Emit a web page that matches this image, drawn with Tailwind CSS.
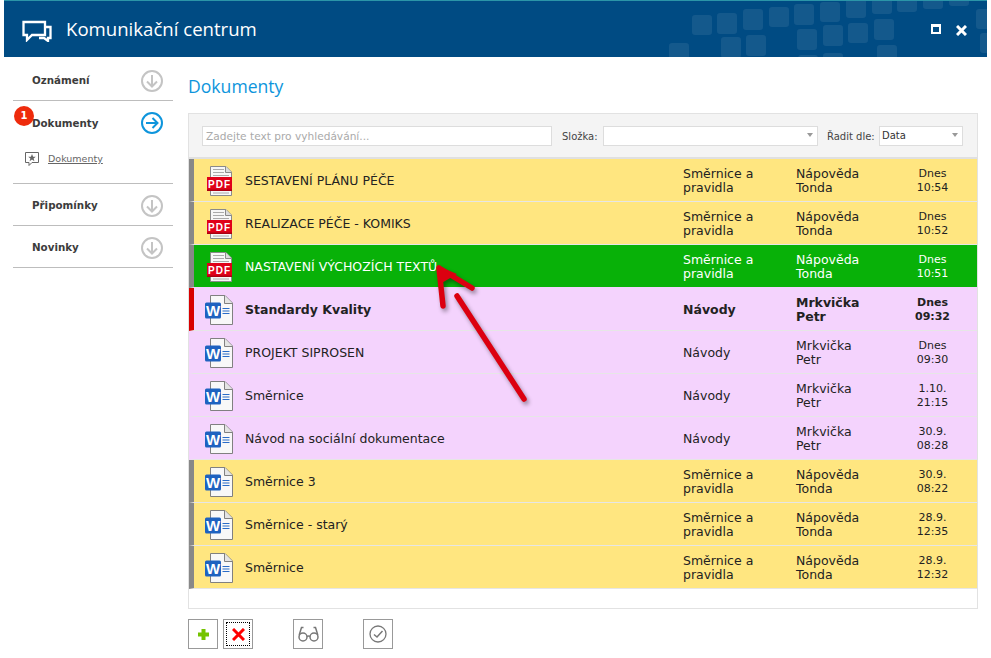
<!doctype html>
<html lang="cs"><head><meta charset="utf-8">
<script src="https://cdn.jsdelivr.net/npm/@tailwindcss/browser@4"></script>
</head>
<body class="bg-white">
<div class="relative w-[991px] h-[658px] overflow-hidden bg-white font-['DejaVu_Sans',sans-serif] text-[#222]">
  <svg width="0" height="0" class="absolute">
    <defs>
      <symbol id="pdf" viewBox="0 0 26 30">
        <path d="M3.500 .5H19L24.500 6V29.500H3.500Z" fill="#f7f7f7" stroke="#8a8a8a"/><path d="M18.500 .5V6.500H24.500" fill="#ddd" stroke="#8a8a8a"/>
        <path d="M6 3.500H17M6 6.500H17M6 9.500H22M6 27H22" stroke="#aaa"/>
        <rect x="0" y="11" width="25" height="14" fill="#e00019"/><rect x="0" y="23.500" width="25" height="1.500" fill="#a90012"/>
        <text x="12.500" y="22" text-anchor="middle" font-family="Liberation Sans" font-size="10" font-weight="700" fill="#fff" letter-spacing="1">PDF</text>
      </symbol>
      <symbol id="word" viewBox="0 0 28 30">
        <path d="M5.500 .5H20L27.500 8V29.500H5.500Z" fill="#f8f8f8" stroke="#808080"/><path d="M19.500 .5V8.500H27.500" fill="#e4e4e4" stroke="#808080"/>
        <rect x="0" y="7.500" width="16" height="16" rx="1.500" fill="#1e62c0"/>
        <text x="8" y="21" text-anchor="middle" font-family="Liberation Sans" font-size="15" font-weight="700" fill="#fff">W</text>
        <path d="M17.500 13.500H24.500M17.500 16H24.500M17.500 18.500H24.500" stroke="#2a6cc8"/>
      </symbol>
      <symbol id="down" viewBox="0 0 22 22"><circle cx="11" cy="11" r="10" fill="none" stroke="#c4c4c4" stroke-width="2"/><path d="M11 5V16.500M6 11.500L11 16.500L16 11.500" fill="none" stroke="#c4c4c4" stroke-width="2"/></symbol>
    </defs>
  </svg>

  <header class="absolute left-[4px] top-0 w-[983px] h-[57px] border-t border-[#2b95a8] bg-[#004b83] overflow-hidden text-white">
    <svg class="absolute left-[620px] top-[-1px]" width="363" height="58" fill="#fff" fill-opacity=".08">
      <rect x="68" y="15" width="20" height="20" rx="3"/><rect x="93" y="13" width="20" height="21" rx="3"/><rect x="119" y="9" width="20" height="21" rx="3"/><rect x="145" y="7" width="20" height="20" rx="3"/><rect x="170" y="4" width="20" height="21" rx="3"/><rect x="196" y="2" width="20" height="20" rx="3"/><rect x="222" y="-3" width="20" height="21" rx="3"/><rect x="248" y="-6" width="20" height="20" rx="3"/><rect x="273" y="-8" width="20" height="20" rx="3"/><rect x="299" y="-11" width="20" height="20" rx="3"/><rect x="325" y="-14" width="20" height="20" rx="3"/>
      <rect x="352" y="9" width="20" height="20" rx="3"/><rect x="356" y="33" width="20" height="20" rx="3"/>
      <rect x="97" y="37" width="20" height="21" rx="3"/><rect x="122" y="35" width="20" height="21" rx="3"/><rect x="45" y="43" width="20" height="20" rx="3"/>
      <rect x="173" y="29" width="20" height="21" rx="3"/><rect x="199" y="25" width="20" height="21" rx="3"/><rect x="224" y="23" width="20" height="20" rx="3"/><rect x="250" y="19" width="20" height="21" rx="3"/><rect x="253" y="45" width="20" height="20" rx="3"/><rect x="174" y="55" width="20" height="20" rx="3"/><rect x="199" y="53" width="20" height="20" rx="3"/>
    </svg>
    <svg class="absolute left-[18px] top-[19px]" width="30" height="22" viewBox="0 0 30 22" fill="none" stroke="#fff" stroke-width="2.300"><path d="M23 7V2H1.500V15H5V20L10 15H23V7"/><path d="M24 7H28.500V18H26V21L22 18H17"/></svg>
    <h1 class="absolute left-[62px] top-[13px] text-[18.600px] leading-[30px] font-['Open_Sans',sans-serif]">Komunikační centrum</h1>
    <span class="absolute left-[927px] top-[23px] w-[10px] h-[10px] border-2 border-t-[3px] border-white"></span>
    <svg class="absolute left-[952px] top-[24px]" width="11" height="11" viewBox="0 0 11 11"><path d="M1 1L10 10M10 1L1 10" stroke="#fff" stroke-width="3"/></svg>
  </header>

  <aside class="absolute left-[13px] top-[60px] w-[160px] text-[10.300px] font-bold text-[#3c3c3c]">
    <div class="h-[41px] border-b border-[#bdbdbd] flex items-center justify-between pl-[19px] pr-[10px] pt-[2px]"><span>Oznámení</span><svg class="w-[22px] h-[22px]"><use href="#down"/></svg></div>
    <div class="relative h-[83px] border-b border-[#bdbdbd]">
      <span class="absolute left-[1px] top-[5px] w-[20px] h-[20px] rounded-full bg-[#ee2b0c] text-white text-[10px] leading-[20px] text-center">1</span>
      <div class="h-[43px] flex items-center justify-between pl-[19px] pr-[10px] pt-[1px]"><span class="pt-[1px]">Dokumenty</span>
        <svg width="22" height="22" viewBox="0 0 22 22" fill="none" stroke="#0e95dc" stroke-width="2"><circle cx="11" cy="11" r="10"/><path d="M5 11H16.500M11.500 6L16.500 11L11.500 16"/></svg></div>
      <div class="mt-[8px] flex items-center pl-[12px] gap-[9px] font-normal text-[9.500px] text-[#666]">
        <svg width="14" height="14" viewBox="0 0 14 14"><path d="M.5 .5H13.500V10.500H7L4 13.500V10.500H.5Z" fill="#fff" stroke="#666"/><path d="M7 2L8.100 4.800H10.800L8.600 6.500L9.400 9.200L7 7.600L4.600 9.200L5.400 6.500L3.200 4.800H5.900Z" fill="#666"/></svg>
        <span class="underline">Dokumenty</span></div>
    </div>
    <div class="h-[42px] border-b border-[#bdbdbd] flex items-center justify-between pl-[19px] pr-[10px] pt-[3px]"><span>Připomínky</span><svg class="w-[22px] h-[22px]"><use href="#down"/></svg></div>
    <div class="h-[42px] border-b border-[#bdbdbd] flex items-center justify-between pl-[19px] pr-[10px] pt-[3px]"><span>Novinky</span><svg class="w-[22px] h-[22px]"><use href="#down"/></svg></div>
  </aside>

  <main class="absolute left-[188px] top-[74px] w-[790px]">
    <h2 class="text-[17.600px] leading-[25px] text-[#0e95dc] font-['Open_Sans',sans-serif]">Dokumenty</h2>
    <section class="mt-[14px] h-[496px] border border-[#e2e2e2] bg-white">
      <div class="h-[45px] bg-[#f4f4f4] border-b-2 border-[#e0e0e0] flex items-center text-[10.600px] text-[#444] pt-[1px]">
        <div class="ml-[13px] w-[350px] h-[20px] bg-white border border-[#ddd] px-[3px] leading-[18px] text-[#aaa]">Zadejte text pro vyhledávání...</div>
        <span class="ml-[10px] w-[41px] text-[10px]">Složka:</span>
        <div class="relative w-[215px] h-[20px] bg-white border border-[#ddd]"><i class="absolute right-[4px] top-[6px] border-x-[3px] border-t-[4px] border-x-transparent border-t-[#999]"></i></div>
        <span class="ml-[9px] w-[52px] whitespace-nowrap text-[10px]">Řadit dle:</span>
        <div class="relative w-[84px] h-[20px] bg-white border border-[#ddd] px-[2px] leading-[18px] text-[#333] text-[10px]">Data<i class="absolute right-[4px] top-[6px] border-x-[3px] border-t-[4px] border-x-transparent border-t-[#999]"></i></div>
      </div>

      <div class="text-[12.500px] leading-[14px]">
        <div class="h-[43px] pt-[1px] flex items-center border-b border-[#e6e6e6] bg-[#ffe680] border-l-[5px] border-l-[#888]">
          <svg class="ml-[13px] w-[26px] h-[30px]"><use href="#pdf"/></svg><span class="ml-[12px] w-[438px]">SESTAVENÍ PLÁNU PÉČE</span><span class="w-[113px]">Směrnice a<br>pravidla</span><span class="w-[113px]">Nápověda<br>Tonda</span><span class="w-[47px] text-center text-[11px]">Dnes<br>10:54</span></div>
        <div class="h-[43px] pt-[1px] flex items-center border-b border-[#e6e6e6] bg-[#ffe680] border-l-[5px] border-l-[#888]">
          <svg class="ml-[13px] w-[26px] h-[30px]"><use href="#pdf"/></svg><span class="ml-[12px] w-[438px]">REALIZACE PÉČE - KOMIKS</span><span class="w-[113px]">Směrnice a<br>pravidla</span><span class="w-[113px]">Nápověda<br>Tonda</span><span class="w-[47px] text-center text-[11px]">Dnes<br>10:52</span></div>
        <div class="h-[43px] pt-[1px] flex items-center border-b border-b-[#f4d3fd] bg-[#08b108] text-white border-l-[5px] border-l-[#888]">
          <svg class="ml-[13px] w-[26px] h-[30px]"><use href="#pdf"/></svg><span class="ml-[12px] w-[438px]">NASTAVENÍ VÝCHOZÍCH TEXTŮ</span><span class="w-[113px]">Směrnice a<br>pravidla</span><span class="w-[113px]">Nápověda<br>Tonda</span><span class="w-[47px] text-center text-[11px]">Dnes<br>10:51</span></div>
        <div class="h-[43px] pt-[1px] flex items-center border-b border-[#e6e6e6] bg-[#f4d3fd] font-bold border-l-[5px] border-l-[#d80000]">
          <svg class="ml-[11px] w-[28px] h-[30px]"><use href="#word"/></svg><span class="ml-[12px] w-[438px]">Standardy Kvality</span><span class="w-[113px]">Návody</span><span class="w-[113px]">Mrkvička<br>Petr</span><span class="w-[47px] text-center text-[11px]">Dnes<br>09:32</span></div>
        <div class="h-[43px] pt-[1px] flex items-center border-b border-[#e6e6e6] bg-[#f4d3fd] border-l-[5px] border-l-[#f4d3fd]">
          <svg class="ml-[11px] w-[28px] h-[30px]"><use href="#word"/></svg><span class="ml-[12px] w-[438px]">PROJEKT SIPROSEN</span><span class="w-[113px]">Návody</span><span class="w-[113px]">Mrkvička<br>Petr</span><span class="w-[47px] text-center text-[11px]">Dnes<br>09:30</span></div>
        <div class="h-[43px] pt-[1px] flex items-center border-b border-[#e6e6e6] bg-[#f4d3fd] border-l-[5px] border-l-[#f4d3fd]">
          <svg class="ml-[11px] w-[28px] h-[30px]"><use href="#word"/></svg><span class="ml-[12px] w-[438px]">Směrnice</span><span class="w-[113px]">Návody</span><span class="w-[113px]">Mrkvička<br>Petr</span><span class="w-[47px] text-center text-[11px]">1.10.<br>21:15</span></div>
        <div class="h-[43px] pt-[1px] flex items-center border-b border-[#e6e6e6] bg-[#f4d3fd] border-l-[5px] border-l-[#f4d3fd]">
          <svg class="ml-[11px] w-[28px] h-[30px]"><use href="#word"/></svg><span class="ml-[12px] w-[438px]">Návod na sociální dokumentace</span><span class="w-[113px]">Návody</span><span class="w-[113px]">Mrkvička<br>Petr</span><span class="w-[47px] text-center text-[11px]">30.9.<br>08:28</span></div>
        <div class="h-[43px] pt-[1px] flex items-center border-b border-[#e6e6e6] bg-[#ffe680] border-l-[5px] border-l-[#888]">
          <svg class="ml-[11px] w-[28px] h-[30px]"><use href="#word"/></svg><span class="ml-[12px] w-[438px]">Směrnice 3</span><span class="w-[113px]">Směrnice a<br>pravidla</span><span class="w-[113px]">Nápověda<br>Tonda</span><span class="w-[47px] text-center text-[11px]">30.9.<br>08:22</span></div>
        <div class="h-[43px] pt-[1px] flex items-center border-b border-[#e6e6e6] bg-[#ffe680] border-l-[5px] border-l-[#888]">
          <svg class="ml-[11px] w-[28px] h-[30px]"><use href="#word"/></svg><span class="ml-[12px] w-[438px]">Směrnice - starý</span><span class="w-[113px]">Směrnice a<br>pravidla</span><span class="w-[113px]">Nápověda<br>Tonda</span><span class="w-[47px] text-center text-[11px]">28.9.<br>12:35</span></div>
        <div class="h-[43px] pt-[1px] flex items-center border-b border-[#e6e6e6] bg-[#ffe680] border-l-[5px] border-l-[#888]">
          <svg class="ml-[11px] w-[28px] h-[30px]"><use href="#word"/></svg><span class="ml-[12px] w-[438px]">Směrnice</span><span class="w-[113px]">Směrnice a<br>pravidla</span><span class="w-[113px]">Nápověda<br>Tonda</span><span class="w-[47px] text-center text-[11px]">28.9.<br>12:32</span></div>
      </div>
    </section>

    <div class="mt-[10px] flex">
      <button class="w-[30px] h-[30px] border border-[#999] flex items-center justify-center"><svg width="13" height="13" viewBox="0 0 13 13"><path d="M6.500 1V12M1 6.500H12" stroke="#74c300" stroke-width="4"/></svg></button>
      <button class="ml-[5px] w-[30px] h-[30px] border border-[#999] flex items-center justify-center"><span class="w-[24px] h-[24px] border border-dotted border-black flex items-center justify-center"><svg width="13" height="13" viewBox="0 0 13 13"><path d="M1 1L12 12M12 1L1 12" stroke="#f00" stroke-width="3"/></svg></span></button>
      <button class="ml-[40px] w-[30px] h-[30px] border border-[#999] flex items-center justify-center"><svg width="21" height="16" viewBox="0 0 21 16" fill="none" stroke="#777" stroke-width="1.500"><circle cx="5" cy="11" r="4"/><circle cx="16" cy="11" r="4"/><path d="M9 10.500Q10.500 9.500 12 10.500M1.200 9L3.500 1.500H5.500M19.800 9L17.500 1.500H15.500"/></svg></button>
      <button class="ml-[40px] w-[30px] h-[30px] border border-[#999] flex items-center justify-center"><svg width="18" height="18" viewBox="0 0 18 18" fill="none" stroke="#777" stroke-width="1.300"><circle cx="9" cy="9" r="8"/><path d="M5 9.500L8 12L13.500 6" stroke-width="1.500"/></svg></button>
    </div>
  </main>

  <svg class="absolute left-[430px] top-[260px] pointer-events-none drop-shadow-[2px_3px_2px_rgba(0,0,0,0.4)]" width="110" height="150" viewBox="0 0 110 150" fill="none" stroke-linecap="round" stroke-linejoin="round">
    <path d="M9 8L13 46M9 8L42 28M27 36L94 139" stroke="#dc0010" stroke-width="5.500"/>
    <path d="M8 6L10 24L27 14Z" fill="#dc0010"/>
  </svg>
</div>
</body></html>
